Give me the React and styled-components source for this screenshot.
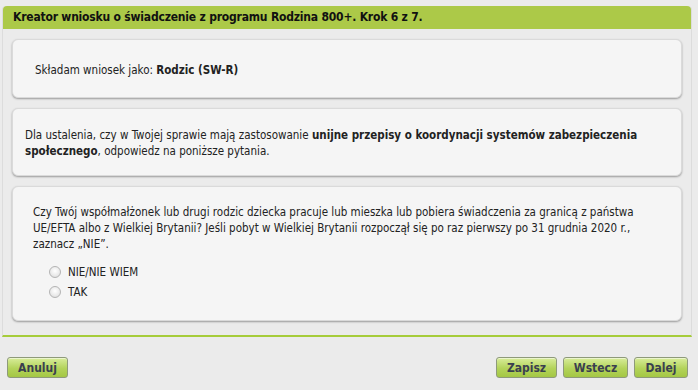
import styled, { createGlobalStyle } from 'styled-components';

const GlobalStyle = createGlobalStyle`
  html, body {
    margin: 0;
    padding: 0;
    background: #ebebeb;
  }
  body {
    font-family: Tahoma, "DejaVu Sans Condensed", "DejaVu Sans", sans-serif;
    font-stretch: condensed;
    color: #222;
  }
`;

const Page = styled.div`
  width: 698px;
  height: 390px;
  padding: 6px 6px 0 2px;
  box-sizing: border-box;
`;

const Frame = styled.section`
  border: 1px solid #dcdcdc;
  border-top: none;
  border-bottom: 2px solid #a6cc3a;
  border-radius: 4px 4px 0 0;
  background: #ebebeb;
`;

const Header = styled.h1`
  margin: 0;
  height: 23px;
  line-height: 23px;
  padding: 0 10px;
  background: #acc948;
  border-radius: 4px 4px 0 0;
  font-size: 12px;
  font-weight: bold;
  letter-spacing: -0.2px;
  color: #111;
`;

const Body = styled.div`
  display: flex;
  flex-direction: column;
  gap: 10px;
  padding: 10px 9px 14px 9px;
`;

const Card = styled.div`
  background: #f5f5f5;
  border: 1px solid #dadada;
  border-radius: 6px;
  box-shadow: 0 1px 2px rgba(0, 0, 0, 0.35);
  padding: ${p => p.$pad};
  font-size: 11.5px;
  line-height: 16px;
  color: #222;
`;

const Text = styled.p`
  margin: 0;
`;

const Options = styled.div`
  display: flex;
  flex-direction: column;
  gap: 4px;
  margin-top: 12px;
  padding-left: 16px;
`;

const Option = styled.label`
  display: flex;
  align-items: center;
  gap: 7px;
  height: 16px;
  font-size: 11.5px;
`;

const Radio = styled.span`
  width: 10px;
  height: 10px;
  border-radius: 50%;
  border: 1px solid #b4b4b4;
  background: radial-gradient(circle at 50% 40%, #ffffff 0%, #e9e9e9 60%, #d5d5d5 100%);
`;

const Footer = styled.div`
  display: flex;
  justify-content: space-between;
  align-items: center;
  padding: 20px 4px 0 5px;
`;

const Group = styled.div`
  display: flex;
  gap: 6px;
`;

const Button = styled.button`
  width: ${p => p.$w}px;
  height: 21px;
  padding: 0;
  border: 1px solid #8e9a7a;
  border-radius: 3px;
  background: linear-gradient(#d8ed9a, #b3d35a 55%, #a4c744);
  font-family: inherit;
  font-stretch: condensed;
  font-size: 12px;
  font-weight: bold;
  color: #3a3f4f;
  box-shadow: inset 0 1px 0 rgba(255, 255, 255, 0.5);
`;

export default function App() {
  return (
    <Page>
      <GlobalStyle />
      <Frame>
        <Header>Kreator wniosku o świadczenie z programu Rodzina 800+. Krok 6 z 7.</Header>
        <Body>
          <Card $pad="22px 22px 19px 22px">
            <Text>Składam wniosek jako: <b>Rodzic (SW-R)</b></Text>
          </Card>
          <Card $pad="18px 14px 16px 12px">
            <Text>
              Dla ustalenia, czy w Twojej sprawie mają zastosowanie <b>unijne przepisy o koordynacji systemów zabezpieczenia społecznego</b>, odpowiedz na poniższe pytania.
            </Text>
          </Card>
          <Card $pad="17px 14px 20px 20px">
            <Text>
              Czy Twój współmałżonek lub drugi rodzic dziecka pracuje lub mieszka lub pobiera świadczenia za granicą z państwa UE/EFTA albo z Wielkiej Brytanii? Jeśli pobyt w Wielkiej Brytanii rozpoczął się po raz pierwszy po 31 grudnia 2020 r., zaznacz „NIE”.
            </Text>
            <Options>
              <Option><Radio />NIE/NIE WIEM</Option>
              <Option><Radio />TAK</Option>
            </Options>
          </Card>
        </Body>
      </Frame>
      <Footer>
        <Button $w={61}>Anuluj</Button>
        <Group>
          <Button $w={61}>Zapisz</Button>
          <Button $w={65}>Wstecz</Button>
          <Button $w={54}>Dalej</Button>
        </Group>
      </Footer>
    </Page>
  );
}
